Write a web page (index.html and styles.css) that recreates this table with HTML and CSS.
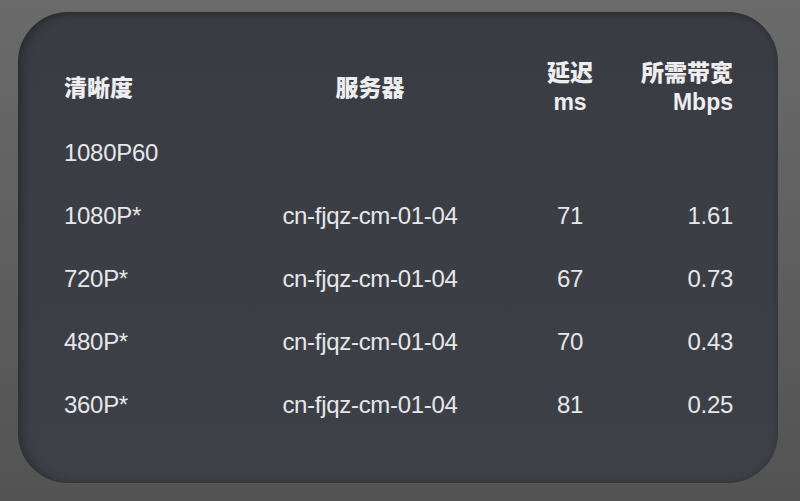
FILE: index.html
```html
<!DOCTYPE html>
<html lang="zh">
<head>
<meta charset="utf-8">
<link rel="stylesheet" href="styles.css">
</head>
<body>
<div class="card">
  <div class="table">
    <div class="row head">
      <div class="c1">清晰度</div>
      <div class="c2">服务器</div>
      <div class="c3">延迟<br>ms</div>
      <div class="c4">所需带宽<br>Mbps</div>
    </div>
    <div class="row">
      <div class="c1">1080P60</div>
      <div class="c2"></div>
      <div class="c3"></div>
      <div class="c4"></div>
    </div>
    <div class="row">
      <div class="c1">1080P*</div>
      <div class="c2">cn-fjqz-cm-01-04</div>
      <div class="c3">71</div>
      <div class="c4">1.61</div>
    </div>
    <div class="row">
      <div class="c1">720P*</div>
      <div class="c2">cn-fjqz-cm-01-04</div>
      <div class="c3">67</div>
      <div class="c4">0.73</div>
    </div>
    <div class="row">
      <div class="c1">480P*</div>
      <div class="c2">cn-fjqz-cm-01-04</div>
      <div class="c3">70</div>
      <div class="c4">0.43</div>
    </div>
    <div class="row">
      <div class="c1">360P*</div>
      <div class="c2">cn-fjqz-cm-01-04</div>
      <div class="c3">81</div>
      <div class="c4">0.25</div>
    </div>
  </div>
</div>
</body>
</html>
```

FILE: styles.css
```css
html, body {
  margin: 0;
  padding: 0;
}
body {
  width: 800px;
  height: 501px;
  background: linear-gradient(180deg, #6b6b6b 0%, #5f5f5f 50%, #535353 100%);
  padding: 12px 22px 18px 18px;
  box-sizing: border-box;
  font-family: "Liberation Sans", "Noto Sans CJK SC", sans-serif;
  color: #e6e7ea;
}
.card {
  height: 471px;
  box-sizing: border-box;
  border-radius: 50px;
  background: linear-gradient(180deg, #393c42 0%, #3d4047 100%);
  box-shadow: inset 6px 0 10px rgba(0,0,0,0.18), inset 0 2px 6px rgba(0,0,0,0.2);
  padding: 47px 45px 0 46px;
}
.table {
  display: flex;
  flex-direction: column;
}
.row {
  display: grid;
  grid-template-columns: 156px 300px 100px 113px;
  align-items: center;
  height: 63px;
  font-size: 24px;
  line-height: 29px;
  letter-spacing: -0.3px;
}
.row.head {
  height: 58px;
  margin-bottom: 4px;
  font-size: 23px;
  font-weight: 900;
  letter-spacing: 0;
  color: #eeeef0;
}
.c1 { text-align: left; }
.c2 { text-align: center; }
.c3 { text-align: center; }
.c4 { text-align: right; }
```
